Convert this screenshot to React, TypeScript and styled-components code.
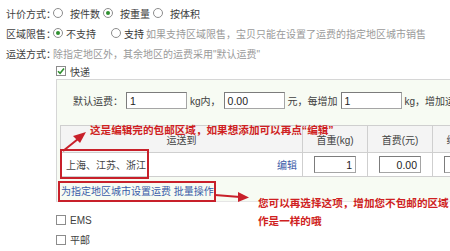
import React from 'react';
import styled, { createGlobalStyle } from 'styled-components';

const GlobalStyle = createGlobalStyle`
  html, body {
    margin: 0;
    padding: 0;
    background: #fff;
    overflow: hidden;
  }
  body {
    font-family: "Liberation Sans", "Noto Sans CJK SC", sans-serif;
    font-size: 10px;
    color: #404040;
  }
`;

const Page = styled.div`
  position: relative;
  width: 450px;
  height: 251px;
  padding: 3px 0 0 6px;
  box-sizing: border-box;
`;

const FormRow = styled.div<{ $h?: number }>`
  display: flex;
  align-items: center;
  height: ${(p) => p.$h || 20}px;
  white-space: nowrap;
`;

const Label = styled.span`
  width: 47px;
  flex-shrink: 0;
`;

const Option = styled.label<{ $gap: number; $after: number }>`
  display: flex;
  align-items: center;
  gap: ${(p) => p.$gap}px;
  margin-right: ${(p) => p.$after}px;
`;

const RadioDot = styled.span<{ $on?: boolean }>`
  position: relative;
  width: 10px;
  height: 10px;
  border: 1px solid #8c8c8c;
  border-radius: 50%;
  background: #fff;
  box-sizing: border-box;
  &::after {
    content: '';
    display: ${(p) => (p.$on ? 'block' : 'none')};
    position: absolute;
    left: 2px;
    top: 2px;
    width: 4px;
    height: 4px;
    border-radius: 50%;
    background: #2f8f2f;
  }
`;

const Hint = styled.span`
  color: #9a9a9a;
`;

const Dark = styled.span`
  color: #333;
`;

const Indent = styled.div`
  margin-left: 50px;
`;

const CheckRow = styled.div<{ $h: number; $mt?: number }>`
  display: flex;
  align-items: center;
  gap: 4px;
  height: ${(p) => p.$h}px;
  margin-top: ${(p) => p.$mt || 0}px;
`;

const Box = styled.span`
  display: flex;
  align-items: center;
  justify-content: center;
  width: 10px;
  height: 10px;
  border: 1px solid #8c8c8c;
  background: #fff;
  box-sizing: border-box;
`;

const Panel = styled.div`
  border-top: 1px solid #d6d6d6;
  border-left: 1px solid #d6d6d6;
  border-bottom: 1px solid #e6e6e6;
  background: #f7fbf3;
  padding: 11px 0 0 3px;
  width: 500px;
  height: 123px;
  box-sizing: border-box;
`;

const FeeRow = styled.div`
  display: flex;
  align-items: center;
  gap: 3px;
  padding-left: 13px;
  height: 19px;
  white-space: nowrap;
`;

const TextInput = styled.span<{ $w: number; $right?: boolean }>`
  display: flex;
  align-items: center;
  justify-content: ${(p) => (p.$right ? 'flex-end' : 'flex-start')};
  width: ${(p) => p.$w}px;
  height: 17px;
  padding: 0 3px;
  box-sizing: border-box;
  border: 1px solid #a5a5a5;
  border-top-color: #7c7c7c;
  border-left-color: #7c7c7c;
  background: #fff;
  color: #222;
  font-size: 10.5px;
`;

const Table = styled.div`
  display: grid;
  grid-template-columns: 242px 65px 65px 65px 65px;
  margin-top: 15px;
  width: 502px;
  border-top: 1px solid #cfcfcf;
  border-left: 1px solid #cfcfcf;
`;

const Cell = styled.div<{ $head?: boolean; $split?: boolean }>`
  display: flex;
  align-items: center;
  justify-content: ${(p) => (p.$split ? 'space-between' : 'center')};
  height: ${(p) => (p.$head ? 26 : 23)}px;
  padding: 0 5px;
  border-right: 1px solid #cfcfcf;
  border-bottom: 1px solid #cfcfcf;
  background: ${(p) => (p.$head ? '#f4f4f4' : '#fff')};
  color: #444;
  white-space: nowrap;
`;

const Link = styled.span`
  color: #3a5ba8;
`;

const LinkRow = styled.div`
  display: flex;
  align-items: center;
  height: 26px;
  padding-left: 1px;
`;

const Note = styled.div<{ $x: number; $y: number }>`
  position: absolute;
  left: ${(p) => p.$x}px;
  top: ${(p) => p.$y}px;
  color: #cf1f22;
  font-size: 10.6px;
  font-weight: bold;
  line-height: 18px;
  white-space: nowrap;
`;

const Frame = styled.div<{ $x: number; $y: number; $w: number; $h: number }>`
  position: absolute;
  left: ${(p) => p.$x}px;
  top: ${(p) => p.$y}px;
  width: ${(p) => p.$w}px;
  height: ${(p) => p.$h}px;
  border: 2px solid #c8202a;
  box-sizing: border-box;
`;

const Arrows = styled.svg`
  position: absolute;
  left: 0;
  top: 0;
  pointer-events: none;
`;

const Check = () => (
  <svg width="8" height="8" viewBox="0 0 8 8">
    <path d="M1 4.2 L3.1 6.3 L7 1.5" fill="none" stroke="#2f8f2f" strokeWidth="1.6" />
  </svg>
);

export default function App() {
  return (
    <Page>
      <GlobalStyle />
      <FormRow>
        <Label>计价方式：</Label>
        <Option $gap={7} $after={3}>
          <RadioDot />
          按件数
        </Option>
        <Option $gap={7} $after={3}>
          <RadioDot $on />
          按重量
        </Option>
        <Option $gap={7} $after={0}>
          <RadioDot />
          按体积
        </Option>
      </FormRow>
      <FormRow>
        <Label>区域限售：</Label>
        <Option $gap={3} $after={15}>
          <RadioDot $on />
          不支持
        </Option>
        <Option $gap={3} $after={2}>
          <RadioDot />
          <Dark>支持</Dark>
        </Option>
        <Hint>如果支持区域限售，宝贝只能在设置了运费的指定地区城市销售</Hint>
      </FormRow>
      <FormRow>
        <Label>运送方式：</Label>
        <Hint>除指定地区外，其余地区的运费采用"默认运费"</Hint>
      </FormRow>
      <Indent>
        <CheckRow $h={16}>
          <Box>
            <Check />
          </Box>
          快递
        </CheckRow>
        <Panel>
          <FeeRow>
            默认运费：
            <TextInput $w={61}>1</TextInput>
            kg内，
            <TextInput $w={61}>0.00</TextInput>
            元，每增加
            <TextInput $w={61}>1</TextInput>
            kg，增加运费：
          </FeeRow>
          <Table>
            <Cell $head>运送到</Cell>
            <Cell $head>首重(kg)</Cell>
            <Cell $head>首费(元)</Cell>
            <Cell $head>续重(kg)</Cell>
            <Cell $head>续费(元)</Cell>
            <Cell $split>
              <span>上海、江苏、浙江</span>
              <Link>编辑</Link>
            </Cell>
            <Cell>
              <TextInput $w={42} $right>1</TextInput>
            </Cell>
            <Cell>
              <TextInput $w={42} $right>0.00</TextInput>
            </Cell>
            <Cell>
              <TextInput $w={42} $right>1</TextInput>
            </Cell>
            <Cell>
              <TextInput $w={42} $right>0.00</TextInput>
            </Cell>
          </Table>
          <LinkRow>
            <Link>为指定地区城市设置运费 批量操作</Link>
          </LinkRow>
        </Panel>
        <CheckRow $h={20} $mt={8}>
          <Box />
          EMS
        </CheckRow>
        <CheckRow $h={19}>
          <Box />
          平邮
        </CheckRow>
      </Indent>

      <Frame $x={60} $y={149} $w={89} $h={30} />
      <Frame $x={58} $y={181} $w={158} $h={21} />
      <Note $x={90} $y={121}>这是编辑完的包邮区域，如果想添加可以再点“编辑”</Note>
      <Note $x={258} $y={194}>
        您可以再选择这项，增加您不包邮的区域
        <br />
        作是一样的哦
      </Note>
      <Arrows width="450" height="251" viewBox="0 0 450 251">
        <line x1="63" y1="151" x2="78" y2="139" stroke="#c8202a" strokeWidth="2" />
        <polygon points="86,132 73,136 80,143" fill="#c8202a" />
        <line x1="215" y1="195" x2="240" y2="197" stroke="#c8202a" strokeWidth="2" />
        <polygon points="249,197.5 238,192 238,202" fill="#c8202a" />
      </Arrows>
    </Page>
  );
}
